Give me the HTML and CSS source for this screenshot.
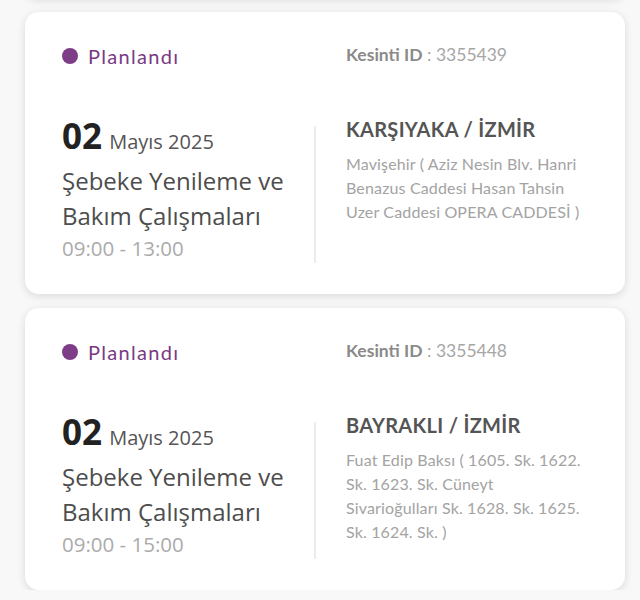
FILE: index.html
```html
<!DOCTYPE html>
<html lang="tr">
<head>
<meta charset="utf-8">
<title>Planlı Kesintiler</title>
<link rel="stylesheet" href="styles.css">
</head>
<body>
<div class="list">
  <div class="card" aria-hidden="true"></div>

  <article class="card">
    <div class="head">
      <div class="status"><span class="dot"></span>Planlandı</div>
      <div class="kid"><b>Kesinti ID</b> : 3355439</div>
    </div>
    <div class="body">
      <div class="when">
        <div class="date"><span class="day">02</span> <span class="month">Mayıs 2025</span></div>
        <div class="title">Şebeke Yenileme ve Bakım Çalışmaları</div>
        <div class="time">09:00 - 13:00</div>
      </div>
      <div class="sep"></div>
      <div class="where">
        <div class="place">KARŞIYAKA / İZMİR</div>
        <div class="addr">Mavişehir ( Aziz Nesin Blv. Hanri Benazus Caddesi Hasan Tahsin Uzer Caddesi OPERA CADDESİ )</div>
      </div>
    </div>
  </article>

  <article class="card">
    <div class="head">
      <div class="status"><span class="dot"></span>Planlandı</div>
      <div class="kid"><b>Kesinti ID</b> : 3355448</div>
    </div>
    <div class="body">
      <div class="when">
        <div class="date"><span class="day">02</span> <span class="month">Mayıs 2025</span></div>
        <div class="title">Şebeke Yenileme ve Bakım Çalışmaları</div>
        <div class="time">09:00 - 15:00</div>
      </div>
      <div class="sep"></div>
      <div class="where">
        <div class="place">BAYRAKLI / İZMİR</div>
        <div class="addr">Fuat Edip Baksı ( 1605. Sk. 1622. Sk. 1623. Sk. Cüneyt Sivarioğulları Sk. 1628. Sk. 1625. Sk. 1624. Sk. )</div>
      </div>
    </div>
  </article>
</div>
</body>
</html>
```

FILE: styles.css
```css
* { box-sizing: border-box; }

html, body {
  margin: 0;
  padding: 0;
  background: #f8f8f8;
}

body {
  font-family: "Lato", "Noto Sans", sans-serif;
  overflow: hidden;
}

.list {
  display: flex;
  flex-direction: column;
  gap: 14px;
  margin: -284px 15px 0 25px;
}

.card {
  height: 282px;
  flex: none;
  background: #ffffff;
  border-radius: 14px;
  box-shadow: 0 2px 8px rgba(0, 0, 0, 0.13);
  padding: 30px 40px 0 37px;
}

.head {
  display: grid;
  grid-template-columns: 284px 1fr;
  align-items: center;
  height: 28px;
}

.status {
  display: flex;
  align-items: center;
  gap: 10px;
  color: #7a3a82;
  font-size: 20px;
  letter-spacing: 1.3px;
}

.dot {
  width: 16px;
  height: 16px;
  border-radius: 50%;
  background: #7e3d87;
}

.kid {
  margin-bottom: 4px;
  color: #a6a6a6;
  font-size: 17.5px;
}

.kid b {
  color: #8a8a8a;
  font-weight: 700;
}

.body {
  display: flex;
  margin-top: 46px;
}

.when {
  width: 252px;
  font-family: "Open Sans", "Noto Sans", sans-serif;
}

.date {
  line-height: 40px;
  white-space: nowrap;
}

.day {
  font-size: 35px;
  font-weight: 700;
  color: #222222;
  margin-right: 3px;
}

.month {
  font-size: 20px;
  color: #555555;
}

.title {
  font-size: 24px;
  line-height: 35px;
  color: #4d4d4d;
}

.time {
  font-size: 20.5px;
  line-height: 30px;
  color: #ababab;
}

.sep {
  width: 2px;
  margin-top: 10px;
  background: #ececec;
}

.where {
  flex: 1;
  padding-left: 30px;
}

.place {
  font-size: 20px;
  font-weight: 700;
  line-height: 26px;
  letter-spacing: 0.3px;
  color: #555555;
}

.addr {
  margin-top: 10px;
  font-size: 16px;
  line-height: 24px;
  letter-spacing: 0.15px;
  color: #a3a3a3;
}
```
